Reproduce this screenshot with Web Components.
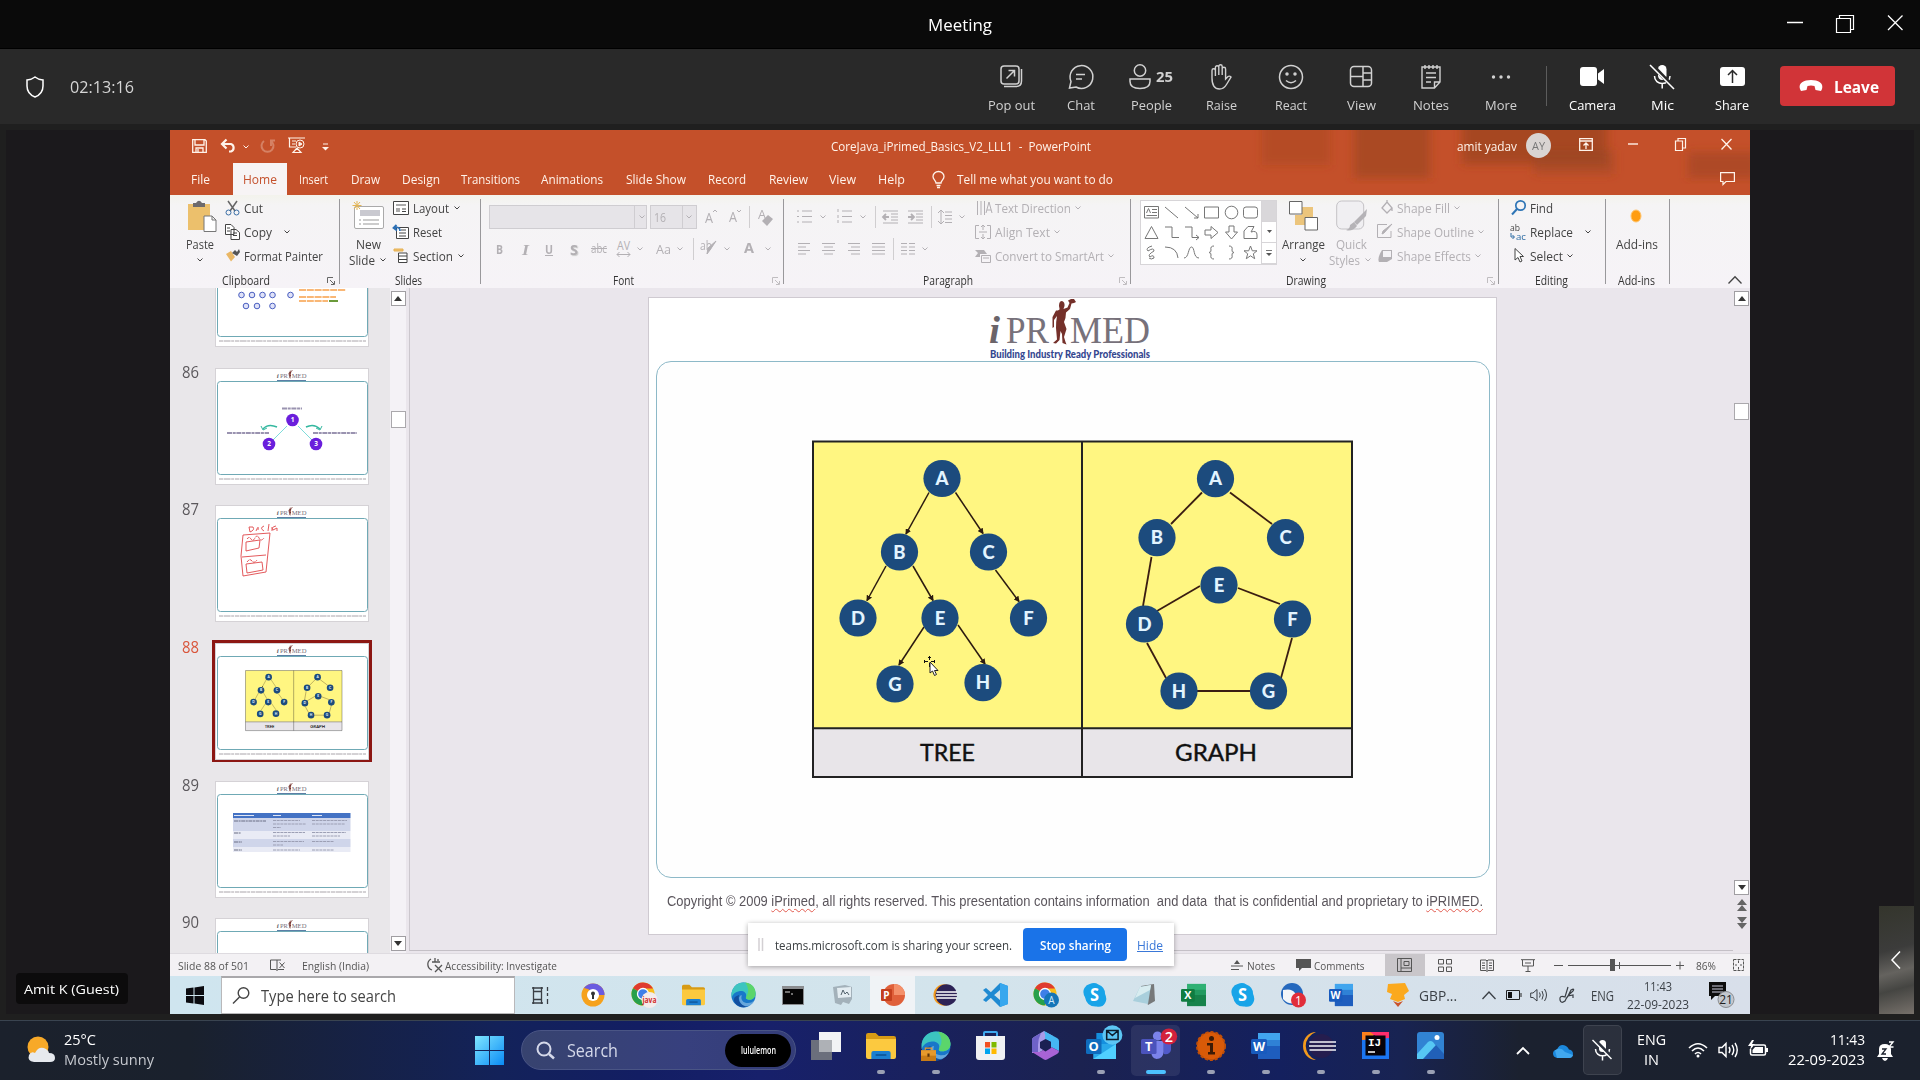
<!DOCTYPE html>
<html lang="en">
<head>
<meta charset="utf-8">
<title>Meeting</title>
<style>
html,body{margin:0;height:100%;background:#1f1f1f;overflow:hidden}
body{font-family:"Open Sans","Noto Sans",sans-serif}
</style>
</head>
<body>
<meeting-app></meeting-app>
<script>
/* ---------- helpers ---------- */
const BASE = `*{box-sizing:border-box}svg{display:block;overflow:visible;flex:none}.row{display:flex;align-items:center}.c{flex:none;display:flex;align-items:center}.col{display:flex;flex-direction:column}`;
const define = (name, css, html) => customElements.define(name, class extends HTMLElement {
  connectedCallback() {
    if (this.shadowRoot) return;
    const r = this.attachShadow({mode: 'open'});
    r.innerHTML = `<style>${BASE}${css}</style>` + (typeof html === 'function' ? html(this) : html);
  }
});
// lay cells left to right; every item is [x, width, markup, extra style]
const row = (x0, items) => {
  let p = x0;
  return items.map(([x, w, h, s = '']) => {
    const out = `<div class="c" style="margin-left:${+(x - p).toFixed(2)}px;width:${w}px;${s}">${h}</div>`;
    p = x + w;
    return out;
  }).join('');
};
const T = (x, w, s, st = '') => [x, w, `<fit-text w="${w}">${s}</fit-text>`, st];
const S = (w, h, inner, attr = '') => `<svg width="${w}" height="${h}" viewBox="0 0 ${w} ${h}" fill="none" stroke="currentColor" ${attr}>${inner}</svg>`;
const I = (x, w, h, inner, st = '', attr = '') => [x, w, S(w, h, inner, attr), st];
const CH = (x, st = '') => I(x - 3, 6, 4, '<path d="M.5 .5L3 3L5.5 .5"/>', st);
const SEP = (x, h = 22) => [x, 1, '', `height:${h}px;background:#d0ced0;align-self:center`];

customElements.define('fit-text', class extends HTMLElement {
  connectedCallback() {
    if (this.shadowRoot) return;
    const w = +this.getAttribute('w');
    this.attachShadow({mode: 'open'}).innerHTML =
      `<style>:host{display:inline-block;white-space:pre;flex:none;width:${w}px}span{display:inline-block;transform-origin:0 50%}</style><span><slot></slot></span>`;
    queueMicrotask(() => {
      const s = this.shadowRoot.querySelector('span');
      const real = s.getBoundingClientRect().width;
      if (real) s.style.transform = `scaleX(${w / real})`;
    });
  }
});

/* ---------- meeting window ---------- */
define('window-bar', `:host{display:flex;align-items:center;height:49px;background:#0a0a0a;border-bottom:1px solid #000;color:#fff;font-size:16.5px}`,
  row(0, [
    T(928, 64, 'Meeting'),
    I(1787, 16, 20, '<path d="M0 8.5H16" stroke-width="1.5"/>'),
    I(1836, 18, 20, '<path d="M.5 4.5H14.5V18.5H.5ZM3.5 4V1.5H17.5V15.5H15" stroke-width="1.2"/>'),
    I(1888, 15, 20, '<path d="M0 1.5L14.500 16M14.500 1.5L0 16" stroke-width="1.3"/>')
  ]));

define('call-button', `:host{display:flex;flex-direction:column;align-items:center;width:70px;height:75px;padding-top:14.5px;color:#d1d1d1;font-size:13.5px}:host([bright]){color:#fff}.i{height:26px;display:flex;align-items:center;gap:5px}.i b{font-size:14.5px}.l{margin-top:6.5px;line-height:19px}`,
  el => `<div class="i"><slot></slot></div><div class="l"><fit-text w="${el.getAttribute('w')}">${el.getAttribute('label')}</fit-text></div>`);

const callBtn = (label, w, icon, extra = '') => `<call-button label="${label}" w="${w}" ${extra}>${icon}</call-button>`;
define('call-bar', `:host{display:flex;height:75px;background:#292929;color:#d6d6d6}
.l{display:flex;align-items:center;width:976px;font-size:17px}.d{width:1px;height:40px;background:#5c5c5c;margin:17px 10px 0}
.leave{margin:17px 0 0 13px;width:115px;height:40px;border-radius:4px;background:#d13438;color:#fff;display:flex;align-items:center;font-weight:700;font-size:16.5px}`,
  `<div class="l">${row(0, [
    I(26, 18, 22, '<path d="M9 1C6.500 3 4 3.800 1 4V10C1 15.500 4 19 9 21C14 19 17 15.500 17 10V4C14 3.800 11.500 3 9 1Z" stroke="#fff" stroke-width="1.5"/>'),
    T(70, 64, '02:13:16')])}</div>
  ${callBtn('Pop out', 47, S(24, 26, '<rect x="2" y="2" width="18" height="18" rx="3"/><path d="M5 22.500H17Q22.500 22.500 22.500 17V5M7.500 14.500L15.500 6.500M9.500 6.500H15.500V12.500" />', 'stroke-width="1.5"'))}
  ${callBtn('Chat', 28, S(26, 26, '<path d="M1.500 24L3 17.500A11.400 11.400 0 1 1 8 23Z M8 10.500H17M8 15H14"/>', 'stroke-width="1.5"'))}
  ${callBtn('People', 41, S(22, 26, '<circle cx="11" cy="6.500" r="5.700"/><path d="M1 15H21V17.500C21 22 17 24.500 11 24.500S1 22 1 17.500Z"/>', 'stroke-width="1.5"') + '<b><fit-text w="17">25</fit-text></b>')}
  ${callBtn('Raise', 31, S(24, 26, '<path d="M3 14V6.500a1.700 1.700 0 0 1 3.400 0V12V3.500a1.700 1.700 0 0 1 3.400 0V11V2.500a1.700 1.700 0 0 1 3.400 0V11V5a1.700 1.700 0 0 1 3.400 0V15L19 12.500Q20.500 11.500 22 13L17.500 20.500C15.500 24 13.500 25 10.500 25C5.500 25 3 21 3 14Z"/>', 'stroke-width="1.4"'))}
  ${callBtn('React', 32, S(26, 26, '<circle cx="13" cy="13" r="11.500"/><circle cx="9" cy="10" r="1" fill="currentColor"/><circle cx="17" cy="10" r="1" fill="currentColor"/><path d="M8 16.500Q13 21 18 16.500"/>', 'stroke-width="1.5"'))}
  ${callBtn('View', 29, S(24, 26, '<rect x="1.500" y="2.500" width="21" height="20" rx="3.500"/><path d="M14 2.500V22.500M1.500 12.500H14M14 9H22.500M14 16H22.500"/>', 'stroke-width="1.5"'))}
  ${callBtn('Notes', 36, S(20, 26, '<path d="M1 3H19V18L13.500 24H1ZM13.500 24V18H19M5 9H15M5 13.500H15M5 18H10M4 1V5M8 1V5M12 1V5M16 1V5"/>', 'stroke-width="1.4"'))}
  ${callBtn('More', 32, S(20, 26, '<g fill="currentColor" stroke="none"><circle cx="2.500" cy="13" r="1.700"/><circle cx="10" cy="13" r="1.700"/><circle cx="17.500" cy="13" r="1.700"/></g>'))}
  <div class="d"></div>
  ${callBtn('Camera', 47, S(25, 26, '<g fill="currentColor" stroke="none"><rect y="3" width="17" height="19" rx="3"/><path d="M18 9.500L24 5V20L18 15.500Z"/></g>'), 'bright')}
  ${callBtn('Mic', 23, S(26, 26, '<rect x="9" y="1" width="8.500" height="15" rx="4.200" fill="currentColor" stroke="none"/><path d="M5.500 12C5.500 22 21 22 21 12M13.200 19V24.500" stroke-width="1.500"/><path d="M2 0L26 25" stroke="#292929" stroke-width="4"/><path d="M1 1L25 25" stroke-width="1.600"/>'), 'bright')}
  ${callBtn('Share', 34, S(25, 26, '<rect y="3" width="25" height="19" rx="3" fill="currentColor" stroke="none"/><path d="M12.500 19V7M8 11L12.500 6.500L17 11" stroke="#292929" stroke-width="1.500"/>'), 'bright')}
  <div class="leave">${row(0, [I(19, 24, 12, '<path d="M1 9C-1 3 5 0 12 0S25 3 23 9L22 11L16.500 10L15.500 6Q12 4.800 8.500 6L7.500 10L2 11Z" fill="#fff" stroke="none"/>'), T(54, 45, 'Leave')])}</div>`);

/* ---------- PowerPoint title + tabs ---------- */
define('ppt-head', `:host{display:block;position:relative;height:65px;background:#c4502a;color:#fff3ea;font-size:12.500px;overflow:hidden}
.bg{position:absolute;inset:0}.t{display:flex;align-items:center;height:33px;position:relative}.m{display:flex;align-items:center;height:32px;position:relative;font-size:13px}
.av{width:25px;height:25px;border-radius:50%;background:#d9d4d2;color:#777;font-size:11px;justify-content:center}`,
  `<svg class="bg" width="1580" height="65"><defs><filter id="b"><feGaussianBlur stdDeviation="5"/></filter></defs>
   <g filter="url(#b)" fill="#97441f"><rect x="1092" y="-10" width="68" height="45" opacity=".35"/><rect x="1184" y="-10" width="76" height="58" opacity=".6"/><rect x="1292" y="-10" width="145" height="44" opacity=".65"/><rect x="1364" y="20" width="80" height="24" opacity=".45"/><rect x="1518" y="22" width="70" height="26" opacity=".5"/></g></svg>
  <div class="t">${row(170, [
    I(192, 15, 14, '<path d="M.7 .7H13L14.300 2V13.300H.7ZM3 1V6H12V1M4 13V9H11V13M6 10V13" stroke-width="1.300"/>', 'margin-top:-2px'),
    I(221, 16, 14, '<path d="M1 5H10A4 4 0 0 1 10 12.500H8M5.500 .5L1 5L5.500 9.500" stroke-width="2.200"/>', 'margin-top:-2px'),
    CH(246), I(260, 15, 14, '<path d="M4 2A6 6 0 1 0 11 2M11 7V1.500H15" stroke-width="2"/>', 'opacity:.3;margin-top:-2px'),
    I(288, 17, 16, '<path d="M0 1H17M1.500 1V10H8M4 4H8M4 7H7M9 11L5 15.500H13L9 11" stroke-width="1.200"/><circle cx="12" cy="7" r="4"/><path d="M11 5L14 7L11 9Z" fill="currentColor"/>', 'margin-top:-3px'),
    I(322, 7, 8, '<path d="M1 1H6"/><path d="M0 4H7L3.500 7.500Z" fill="currentColor" stroke="none"/>'),
    T(831, 260, 'CoreJava_iPrimed_Basics_V2_LLL1  -  PowerPoint'), T(1457, 60, 'amit yadav'),
    [1526, 25, '<div class="c av"><fit-text w="13">AY</fit-text></div>', 'margin-top:-2px'],
    I(1579, 14, 17, '<path d="M.7 1.700H13.300V13.300H.7ZM.7 4H13.300M7 12V6.500M4.500 8.500L7 6L9.500 8.500" stroke-width="1.300"/>', 'margin-top:-3px'),
    I(1628, 10, 17, '<path d="M0 6H10" stroke-width="1.400"/>'),
    I(1675, 11, 17, '<path d="M.5 4H7.500V13.500H.5ZM3 3.500V1.500H10.500V11H8" stroke-width="1.200"/>', 'margin-top:-2px'),
    I(1721, 11, 17, '<path d="M.5 2L10.500 12.500M10.500 2L.5 12.500" stroke-width="1.300"/>', 'margin-top:-2px')])}</div>
  <div class="m">${row(170, [T(191, 19, 'File'), [233, 54, '<fit-text w="34">Home</fit-text>', 'background:#f7f4f5;color:#c4512d;height:32px;padding-left:10px'],
    ...[[299, 29, 'Insert'], [351, 29, 'Draw'], [402, 38, 'Design'], [461, 59, 'Transitions'], [541, 62, 'Animations'], [626, 60, 'Slide Show'], [708, 38, 'Record'], [769, 39, 'Review'], [829, 27, 'View'], [878, 27, 'Help']].map(a => T(...a)),
    I(932, 13, 17, '<path d="M4 12C4 9.500 1 8.500 1 5.500A5.500 5 0 0 1 12 5.500C12 8.500 9 9.500 9 12ZM4.500 14.500H8.500M5 16.500H8" stroke-width="1.300"/>'),
    T(957, 156, 'Tell me what you want to do'),
    I(1720, 15, 13, '<path d="M.6 .6H14.400V9.500H6L3 12.500V9.500H.6Z" stroke-width="1.200"/>', 'margin-top:-2px')])}</div>`);

/* ---------- ribbon ---------- */
define('ribbon-group', `:host{display:block;flex:none;width:var(--w);position:relative;height:93px;padding-top:1px}
:host([line])::after{content:"";position:absolute;right:0;top:4px;bottom:4px;width:1px;background:#99989b}
.b{display:flex;height:77px}.f{display:flex;align-items:center;height:16px;font-size:12px;line-height:16px;color:#333}`,
  el => { const x0 = +el.getAttribute('x'), lx = +el.getAttribute('lx'), lw = +el.getAttribute('lw'), d = +el.getAttribute('d');
    return `<div class="b"><slot></slot></div><div class="f">${row(x0, [T(lx, lw, el.getAttribute('label')), ...(d ? [I(d, 8, 8, '<path d="M.5 6V.5H6M3 3L7 7M7.500 4V7.500H4"/>', `color:${el.hasAttribute('dim') ? '#c0bdc0' : '#666'}`)] : [])])}</div>`; });
const group = (x, w, label, lx, lw, d, body, extra = '') => `<ribbon-group style="--w:${w}px" x="${x}" label="${label}" lx="${lx}" lw="${lw}" d="${d}" ${extra}>${body}</ribbon-group>`;
const rows = (x0, w, list, cls = '') => `<div class="col ${cls}" style="width:${w}px">${list.map(r => `<div class="row r">${row(x0, r)}</div>`).join('')}</div>`;
const big = (x0, w, icon, l1, l2, cls = '') => `<div class="col ${cls}" style="width:${w}px"><div class="row bi">${row(x0, [icon])}</div><div class="row bt">${row(x0, l1)}</div><div class="row bt">${row(x0, l2)}</div></div>`;
const G = 'color:#b3b0b4';
const L = (ws, x = 0) => ws.map((w, i) => `<path d="M${x} ${1.5 + i * 3.5}H${x + w}"/>`).join('');

define('shape-gallery', `:host{display:flex;width:137px;height:65px;background:#fff;border:1px solid #d7d5d8;margin-top:4px;color:#777}
.g{display:grid;grid-template-columns:repeat(6,19.8px);grid-template-rows:repeat(3,20px);padding:2px 0 0 1px;place-items:center;flex:1}
.s{width:15px;display:grid;grid-template-rows:1fr 1fr 1fr;border-left:1px solid #d7d5d8}.s div{display:grid;place-items:center;border-bottom:1px solid #d7d5d8}.s div:first-child{background:#d9d7da}`,
  `<div class="g">${['<path d="M.5 1.500H14.500V13H.5ZM8 4.500H13M8 7.500H13M2.500 10.500H13M2.500 8L4.500 3.500L6.500 8"/>', '<path d="M1 2L14 13"/>', '<path d="M1 2L14 13M14 9V13H10"/>', '<path d="M.5 2H14.500V13H.5Z"/>', '<circle cx="7.500" cy="7.500" r="6.300"/>', '<rect x=".5" y="2" width="14" height="11" rx="2.500"/>',
     '<path d="M7.500 1.500L14 13.500H1Z"/>', '<path d="M1 2H8V12.500H15"/>', '<path d="M1 2H8V12.500H15M12 10L15 12.500L12 15"/>', '<path d="M1 5H7V1.500L14 7.500L7 13.500V10H1Z"/>', '<path d="M5 1V7H1.500L7.500 14L13.500 7H10V1Z"/>', '<path d="M1 13.500V6L5 1.500H11L8 7Q14 5 14 10V13.500Z"/>',
     '<path d="M8 1Q1 3 4 6Q10 2 10 6Q3 10 6 12Q10 9 10 13Q7 15 5 13"/>', '<path d="M1 2Q13 2 14 13"/>', '<path d="M0 13C5 13 4 2 7.500 2S9 13 15 13"/>', '<path d="M10 1Q6 1 7 5Q7.500 7 5 7.500Q7.500 8 7 10Q6 14 10 14"/>', '<path d="M5 1Q9 1 8 5Q7.500 7 10 7.500Q7.500 8 8 10Q9 14 5 14"/>', '<path d="M7.500 1L9.300 5.800H14L10.300 8.800L11.700 13.700L7.500 10.800L3.300 13.700L4.700 8.800L1 5.800H5.700Z"/>'].map(p => S(15, 15, p)).join('')}</div>
  <div class="s"><div></div><div>${S(5, 3, '<path d="M0 0H5L2.500 3Z" fill="#555" stroke="none"/>')}</div><div>${S(6, 6, '<path d="M0 .5H6"/><path d="M0 3H6L3 6Z" fill="#555" stroke="none"/>')}</div></div>`);

define('ppt-ribbon', `:host{display:flex;height:93px;background:linear-gradient(#f3f3ec 0,#f5f4f5 10px,#f6f3f7);color:#444;font-size:13px}
.r{height:24px}.bi{height:40px}.bt{height:16px;line-height:16px}.g{color:#b3b0b4}.f1 .row{height:32px}.f1{padding-top:5px}`,
  group(170, 170, 'Clipboard', 222, 48, 327,
    big(170, 54, I(188, 29, 32, '<path d="M0 4H22V30H0Z" fill="#ecc06c" stroke="none"/><path d="M5 7V3H8Q11-1.500 14 3H17V7Z" fill="#6d6a6c" stroke="none"/><path d="M16 16H24L28 20V31.500H16ZM24 16V20H28" fill="#fff" stroke="#777"/>'), [T(186, 28, 'Paste')], [CH(200)]) +
    rows(224, 115, [
      [I(225, 15, 16, '<path d="M3 1L10 11M12 1L5 11" stroke-width="1.500" stroke="#666"/><circle cx="3.500" cy="12.500" r="2.500" stroke="#3a6ea5"/><circle cx="11.500" cy="12.500" r="2.500" stroke="#3a6ea5"/>'), T(244, 19, 'Cut')],
      [I(225, 15, 16, '<path d="M.5 .5H6L9 3.500V10.500H.5ZM6 5.500H11L14.500 8.500V15.500H6ZM8 9H12M8 11.500H12M2 4H5M2 7H5" fill="#fff"/>'), T(244, 28, 'Copy'), CH(287)],
      [I(226, 14, 13, '<path d="M0 5L5 2L9 8L5 12.500Z" fill="#eab765" stroke="none"/><path d="M6 4L9 1L11 3L13 0L14 3L11 7Z" fill="#555" stroke="none"/>'), T(244, 79, 'Format Painter')]]), 'line') +
  group(340, 141, 'Slides', 395, 27, 0,
    big(340, 52, I(353, 31, 30, '<rect x="1.500" y="5.500" width="29" height="22" rx="1.500" fill="#fff" stroke="#aaa"/><path d="M7 9H27V15H7Z" fill="#c9c9d0" stroke="none"/><path d="M6 19H8M10 19H26M6 23H8M10 23H26" stroke="#999"/><path d="M4 0V9M-.5 4.500H8.500M1 1L7 8M7 1L1 8" stroke="#e3b554"/>'), [T(356, 25, 'New')], [T(349, 26, 'Slide'), CH(383)]) +
    rows(392, 88, [
      [I(393, 16, 14, '<path d="M.5 .5H15.500V13.500H.5Z" fill="#fff"/><path d="M3 3H13V5H3ZM3 7H7V11H3Z" fill="#aaa" stroke="none"/><path d="M9 8H13M9 10.500H13"/>'), T(413, 36, 'Layout'), CH(457)],
      [I(393, 16, 14, '<path d="M3.500 2.500H15.500V13.500H3.500ZM6 8H13M6 11H13M8 5H13" fill="#fff"/><path d="M7 6Q7 1 1 3M3.500 0L.5 3L4 5.500" stroke="#2b6fb5" stroke-width="1.800"/>'), T(413, 29, 'Reset')],
      [I(393, 16, 15, '<path d="M1 1H10V3H1Z" fill="#f0c070" stroke="#e5b050"/><path d="M5.500 5H14V14.500H5.500ZM5.500 8H14M5.500 11.500H14" fill="#fff"/>'), T(413, 40, 'Section'), CH(461)]]), 'line') +
  group(481, 303, 'Font', 613, 21, 772,
    `<div class="col f1" style="width:302px;${G}"><div class="row">${row(481, [
      [489, 158, row(489, [[633, 1, '', 'height:22px;background:#cfcdd1;'], CH(641)]), 'height:24px;border:1px solid #cfcdd1;background:#e6e4e8'],
      [650, 47, row(651, [T(654, 12, '16'), [682, 1, '', 'height:22px;background:#cfcdd1'], CH(689)]), 'height:24px;border:1px solid #cfcdd1;background:#e6e4e8'],
      T(705, 8, 'A', 'font-size:15px'), I(713, 4, 16, '<path d="M0 3L2 1L4 3"/>'), T(729, 8, 'A', 'font-size:14px'), I(737, 4, 16, '<path d="M0 1L2 3L4 1"/>'), SEP(749),
      T(758, 8, 'A', 'margin-top:-6px'), I(762, 11, 14, '<path d="M6 3L11 7L5 14L0 9Z" fill="currentColor" stroke="none"/>', 'margin-top:4px')])}</div>
     <div class="row">${row(481, [T(496, 7, '<b>B</b>'), T(522, 7, '<b><i style="font-family:Liberation Serif">I</i></b>', 'font-size:15px'), T(545, 8, '<b><u>U</u></b>'), T(570, 8, '<b>S</b>', 'font-size:15px;text-shadow:1px 1px 1px #ccc'), T(591, 16, '<s>abc</s>', 'font-size:12px'),
      [617, 13, S(13, 17, '<path d="M0 14.500H13M2.500 12L0 14.500L2.500 17M10.500 12L13 14.500L10.500 17"/><text x="0" y="10" font-size="12" textLength="13" lengthAdjust="spacingAndGlyphs" fill="currentColor" stroke="none">AV</text>')], CH(640), T(656, 15, 'Aa'), CH(680), SEP(693),
      T(700, 12, 'ab', 'font-size:12px;margin-top:-6px'), I(707, 9, 15, '<path d="M9 0L3 9L0 13L1 7Z" fill="currentColor"/>'), CH(727), T(744, 10, '<b>A</b>', 'font-size:15px;margin-top:-3px'), CH(768)])}</div></div>`, 'line dim') +
  group(784, 347, 'Paragraph', 923, 50, 1119,
    `<div class="col f1" style="width:190px;${G}"><div class="row">${row(784, [
      I(797, 15, 15, '<path d="M5 2H15M5 7.500H15M5 13H15M0 2H2M0 7.500H2M0 13H2"/>'), CH(823), I(837, 15, 15, '<path d="M5 2H15M5 7.500H15M5 13H15M1 0V3M1 6V9M1 11V14"/>'), CH(863), SEP(875),
      I(883, 15, 14, '<path d="M0 1H15M8 4H15M8 7H15M8 10H15M0 13H15"/><path d="M6 7H0M3 4L0 7L3 10" stroke-width="1.800"/>'), I(908, 15, 14, '<path d="M0 1H15M8 4H15M8 7H15M8 10H15M0 13H15"/><path d="M0 7H6M3 4L6 7L3 10" stroke-width="1.800"/>'), SEP(931),
      I(938, 14, 14, '<path d="M3 0V14M0 3L3 0L6 3M0 11L3 14L6 11M7 2H14M7 5.500H14M7 9H14M7 12.500H14"/>'), CH(962)])}</div>
      <div class="row">${row(784, [I(798, 12, 13, L([12, 8, 12, 8])), I(822, 13, 13, '<path d="M0 1.500H13M2 5H11M0 8.500H13M2 12H11"/>'), I(848, 12, 13, '<path d="M0 1.500H12M3 5H12M0 8.500H12M3 12H12"/>'), I(872, 13, 13, L([13, 13, 13, 13])), SEP(893), I(901, 14, 13, L([6, 6, 6, 6]) + L([6, 6, 6, 6], 8)), CH(925)])}</div></div>` +
    rows(974, 156, [
      [I(977, 15, 16, '<path d="M.5 1V15M4 1V15M7.500 1V15M9 13L12 2L15 13M10 10H14"/>'), T(995, 76, 'Text Direction'), CH(1078)],
      [I(975, 16, 14, '<path d="M4 .5H.5V13.500H4M12 .5H15.500V13.500H12M8 0V5M6 2L8 0L10 2M8 14V9M6 12L8 14L10 12M4 7H12"/>'), T(995, 55, 'Align Text'), CH(1057)],
      [I(975, 16, 14, '<path d="M0 1H9L12 5H5V8H0L3 4Z" fill="currentColor" stroke="none"/><path d="M6.500 6.500H15.500V13.500H6.500ZM8 9H14"/>'), T(995, 109, 'Convert to SmartArt'), CH(1111)]], 'g'), 'line dim') +
  group(1131, 368, 'Drawing', 1286, 40, 1487,
    `<div style="width:146px;padding-left:9px"><shape-gallery></shape-gallery></div>` +
    big(1277, 51, I(1289, 29, 30, '<path d="M13 6H24V16H13ZM6 14H16V24H6Z" fill="#ecc57c" stroke="none"/><path d="M.5 .5H13V13H.5ZM16 16.500H28.500V29H16Z" fill="#fff" stroke="#666"/>'), [T(1282, 43, 'Arrange')], [CH(1303)]) +
    big(1328, 47, I(1336, 32, 31, '<rect x=".7" y="1" width="27" height="28" rx="5" fill="#f0eff2" stroke="#c4c2c6"/><path d="M31 9L30 16L21 25L18 22Z" fill="#b5b3b7" stroke="none"/><path d="M18 22L21 26Q16 32 10 30Q14 29 14 25Z" fill="#b5b3b7" stroke="none"/>'), [T(1336, 31, 'Quick')], [T(1329, 31, 'Styles'), CH(1368)], 'g') +
    rows(1375, 123, [
      [I(1381, 13, 14, '<path d="M1 8L6 2L11 8L6 13ZM6 2V0M11 8V11" stroke-width="1.300"/>', 'margin-top:-2px'), T(1397, 53, 'Shape Fill'), CH(1457)],
      [I(1377, 16, 14, '<path d="M14 7V13.500H.5V.5H10"/><path d="M15 0L7 9L5 10L6 7Z" fill="currentColor"/>', 'margin-top:-2px'), T(1397, 77, 'Shape Outline'), CH(1481)],
      [I(1378, 15, 14, '<path d="M4 1H14V10L9 13H1Q-1 9 4 1Z" fill="currentColor" stroke="none"/><path d="M5 2H13V8H5Z" fill="#f4f2f5" stroke="none"/>'), T(1397, 74, 'Shape Effects'), CH(1478)]], 'g'), 'line dim') +
  group(1499, 107, 'Editing', 1535, 33, 0, rows(1499, 106, [
      [I(1511, 15, 15, '<circle cx="9.500" cy="5.500" r="4.700" stroke="#2e75b6" stroke-width="1.700"/><path d="M6 9L1 14.500" stroke="#2e75b6" stroke-width="2"/>'), T(1530, 23, 'Find')],
      [[1510, 16, '<div class="col" style="width:16px;font-size:9.500px;line-height:9px"><fit-text w="10">ab</fit-text><div class="row" style="gap:1px;color:#2e6da4">' + S(5, 7, '<path d="M1 0V4H4M2.500 2L4.500 4L2.500 6" stroke="#2e6da4"/>') + '<fit-text w="10">ac</fit-text></div></div>'], T(1530, 43, 'Replace'), CH(1588)],
      [I(1514, 10, 15, '<path d="M1 .5V12L4 9.500L6 14L8 13L6 8.500H9.500Z" fill="#fff"/>'), T(1530, 33, 'Select'), CH(1570)]]), 'line') +
  group(1606, 64, 'Add-ins', 1618, 37, 0, big(1606, 63, I(1629, 14, 14, '<ellipse cx="7" cy="7" rx="5" ry="6" fill="#ff9d12" stroke="#ffc36b" stroke-width="1"/>'), [T(1616, 42, 'Add-ins')], []), 'line') +
  `<div class="row" style="height:93px;align-items:flex-end;padding-bottom:4px">${row(1670, [I(1728, 14, 8, '<path d="M.5 7.500L7 .7L13.500 7.500" stroke-width="1.300"/>')])}</div>`);

/* ---------- slide pane ---------- */
const figure = `<path d="M69 5Q69 0 72 0Q75 1 74.500 5L73.500 8L77.500 6.500L79.500 2L78-.5L81-2H84L86 1L84 2L81.500 2.500L80 8L76 11.500Q76 17 74 21L76.500 28L74 36L75.500 41L76.500 43.500L72.500 42L72 33L70.500 30L69.500 39L66 42.500L63 42L67 38.500L66 27Q66 20 67 15L64 19V26L62.500 27V16L66 9.500Q70 9.500 69.500 7.500Z" fill="#74302a"/>`;
const logo = `<text x="-1" y="41.500" font-family="Liberation Serif" font-style="italic" font-weight="700" font-size="37" fill="#6b6469" textLength="11" lengthAdjust="spacingAndGlyphs">i</text>
 <text x="16" y="41.500" font-family="Liberation Serif" font-size="37" fill="#77717a" textLength="43" lengthAdjust="spacingAndGlyphs">PR</text><text x="80" y="41.500" font-family="Liberation Serif" font-size="37" fill="#77717a" textLength="80" lengthAdjust="spacingAndGlyphs">MED</text>${figure}`;
const edges = (a, c, w, m) => a.map(l => `<path d="M${l[0]} ${l[1]}L${l[2]} ${l[3]}" stroke="${c}" stroke-width="${w}" ${m}/>`).join('');
const nodes = a => a.map(([n, x, y]) => `<circle cx="${x}" cy="${y}" r="18.600" fill="#1c4b7d"/><text x="${x}" y="${y + 6.5}" text-anchor="middle" font-family="Lato" font-weight="900" font-size="18.500" fill="#e2f4ff">${n}</text>`).join('');
const diagram = `<defs><marker id="ar" viewBox="0 0 6 6" refX="5" refY="3" markerWidth="6" markerHeight="6" markerUnits="userSpaceOnUse" orient="auto"><path d="M0 0L6 3L0 6Z" fill="#2b1a10"/></marker></defs>
 <rect x="813" y="441.500" width="539" height="286.500" fill="#fff681"/><rect x="813" y="728" width="539" height="49" fill="#e8e5e9"/>
 <path d="M813 441.500H1352V777H813ZM1082 441.500V777M813 728.300H1352" fill="none" stroke="#222" stroke-width="2"/>
 ${edges([[929, 492.5, 906, 534], [955.5, 492.5, 983, 533.5], [886, 566, 867, 600.5], [913, 566, 933, 600.5], [995.5, 570, 1019, 601.5], [924, 627, 899, 665], [958, 625, 985, 664]], '#2b1a10', 1.5, 'marker-end="url(#ar)"')}
 ${edges([[1202, 492.5, 1171, 524], [1230, 492.5, 1272, 524], [1151.5, 557, 1143, 606], [1157, 611, 1200, 586], [1238, 588, 1280, 604], [1147, 643, 1166, 678], [1292, 638, 1281, 678], [1197, 691, 1250, 691]], '#3a1d12', 1.8, '')}
 ${nodes([['A', 942, 478.5], ['B', 899.5, 552], ['C', 988.5, 552], ['D', 858, 618], ['E', 940, 618], ['F', 1028.5, 618], ['G', 895, 684], ['H', 983, 682.7], ['A', 1215.5, 478.7], ['B', 1157, 537.7], ['C', 1285.5, 537.7], ['E', 1219, 585], ['D', 1144.5, 624], ['F', 1292.5, 619], ['H', 1179, 691], ['G', 1268.5, 691]])}
 <text x="920" y="760.500" font-family="Lato" font-size="22.500" textLength="55" lengthAdjust="spacingAndGlyphs" fill="#111" stroke="#111" stroke-width=".4">TREE</text>
 <text x="1175" y="760.500" font-family="Lato" font-size="22.500" textLength="82" lengthAdjust="spacingAndGlyphs" fill="#111" stroke="#111" stroke-width=".4">GRAPH</text>`;
const thumbArt = {
  85: `<g stroke="#4a5fc0" fill="#dfe2f8"><circle cx="25.500" cy="64" r="2.800"/><circle cx="36" cy="64" r="2.800"/><circle cx="46.500" cy="64" r="2.800"/><circle cx="56.500" cy="64" r="2.800"/><circle cx="74.500" cy="64" r="2.800"/><circle cx="30" cy="75" r="2.800"/><circle cx="41" cy="75" r="2.800"/><circle cx="56.500" cy="75" r="2.800"/></g><path d="M83 59H130M83 66H120M83 70H112" stroke="#f7a04a" stroke-width="1.500" stroke-dasharray="7 .8"/><path d="M113 70H122" stroke="#6b9a3a" stroke-width="2"/>`,
  86: `<path d="M71 57L57 71M82 57L96 71" stroke="#7fdcda"/><path d="M61 58Q52 54 47 60M90 58Q98 54 104 60" stroke="#35b8a0" stroke-width="1.500"/><path d="M45 57L47 61L51 59M106 57L104 61L100 59" stroke="#35b8a0"/><g fill="#6a1edc"><circle cx="76.500" cy="51" r="6.300"/><circle cx="53" cy="75" r="6.300"/><circle cx="100" cy="75" r="6.300"/></g><g font-family="Open Sans" font-weight="700" font-size="6.500" fill="#fff" text-anchor="middle"><text x="76.500" y="53.300">1</text><text x="53" y="77.300">2</text><text x="100" y="77.300">3</text></g><g stroke="#9a93b0" stroke-width="1.800" stroke-dasharray="5 .7 3 .7"><path d="M66 39.500H86M11 64H53M97 64H141"/></g>`,
  87: `<g stroke="#e0474b" stroke-width=".9"><path d="M27 29L54 27L50 66L27 70L25 50ZM26 51L50 49M30 36L44 34L43 42L30 45ZM30 58L46 56L47 64L31 67Z"/><path d="M31 33Q33 30 35 33T39 32T43 32T48 32M31 56Q34 52 36 55T41 54" stroke-dasharray="3 .6"/><path d="M33 21L34 26Q39 24 37 21ZM40 25Q43 18 42 24M48 20Q43 22 48 25M53 18L52 25M56 21V25M60 20Q55 21 57 24L61 22V25"/></g>`,
  88: `<g transform="translate(-116,-52.500) scale(.179)">${diagram.replace('id="ar"', 'id="ar2"').replace('#ar)', '#ar2)')}</g>`,
  89: `<path d="M17 31H134.500V36H17Z" fill="#4472c4"/><path d="M17 36H134.500V49H17ZM17 57H134.500V65H17Z" fill="#cfd5ea"/><path d="M17 49H134.500V57H17ZM17 65H134.500V70H17Z" fill="#e9ebf5"/><path d="M18 33.500H38M57 33.500H65M96 33.500H106" stroke="#dfe6f5"/><g stroke="#6b6f84" stroke-dasharray="4 .6 2 .6" stroke-width="1.200"><path d="M18 39H50M18 51H25M18 60H26M18 68H26"/></g><g stroke="#9c9fb4" stroke-dasharray="3 .7"><path d="M57 38.500H84M57 42H90M57 45.500H65M96 38.500H131M96 42H129M57 50.500H89M57 54H74M96 50.500H130M96 54H124M57 59.500H88M57 63H67M96 59.500H118M57 68H84M96 68H118"/></g>`,
  90: ''
};
define('slide-thumb', `:host{display:flex;flex:none;height:122px;margin-bottom:15.7px}
.n{width:46px;margin-top:-4px;padding-left:12px;font-size:16px;line-height:22px;color:#5b585c;flex:none}
:host([on]) .n{color:#d9553b}.s{padding:1px 1px 1px 1px;border:3px solid transparent;margin-left:-4px;width:160px;height:122px}:host([on]) .s{border-color:#8c1713}
.p{width:152px;height:115px;background:#fff;box-shadow:0 0 0 1px #d5d2d6}`,
  el => { const n = el.getAttribute('n'), cut = n === '85'; return `<div class="n">${cut ? '' : `<fit-text w="17">${n}</fit-text>`}</div><div class="s"><div class="p">${S(152, 115,
   `${cut ? '' : `<g stroke="none" transform="translate(61,1.500) scale(.184)">${logo}</g>`}<path d="M61 11.500H90" stroke="#5b7fa6"/><rect x="1.500" y="12.500" width="150" height="93" rx="3" stroke="#6fa9b5"/><path d="M3 110H150" stroke="#a9a4aa" stroke-dasharray="4 .6 7 .6 3 .8"/><g stroke="none">${thumbArt[n]}</g>`)}</div></div>`; });

define('scroll-bar', `:host{display:flex;flex-direction:column;width:17px;align-items:center;padding-top:3px}
.b{width:15px;height:15px;background:#fff;border:1px solid #a09ea2;display:grid;place-items:center;color:#333}.h{width:15px;height:17px;background:#fff;border:1px solid #aaa8ac}.x{margin-top:4px}`,
  el => `<div class="b">${S(8, 5, '<path d="M0 5L4 0L8 5Z" fill="currentColor" stroke="none"/>')}</div><div class="h" style="margin-top:${el.getAttribute('a')}px"></div><div class="b" style="margin-top:${el.getAttribute('z')}px">${S(8, 5, '<path d="M0 0L4 5L8 0Z" fill="currentColor" stroke="none"/>')}</div>` +
    (el.hasAttribute('pages') ? `<div class="x">${S(10, 30, '<path d="M5 0L10 6H0ZM5 6L10 12H0ZM0 18H10L5 24ZM0 24H10L5 30Z" fill="#666" stroke="none"/>')}</div>` : ''));

define('slide-page', `:host{display:flex;flex-direction:column;position:relative;width:847px;height:636px;background:#fff;box-shadow:0 0 0 1px #cfcad1;flex:none}
.l{height:63px;padding:3px 0 0 341px}.f{margin-left:7px;width:834px;height:517px;border:1px solid #8db9c8;border-radius:15px;background:#fefefe}
.c0{display:flex;align-items:center;height:47px;padding-left:18px;font:14px "Liberation Sans",sans-serif;color:#5a555c}
u{text-decoration:underline wavy #e25b4f 1px;text-underline-offset:2px}.cur{position:absolute;left:274px;top:358px}`,
  `<div class="l">${S(160, 58, `<g stroke="none">${logo}<text x="0" y="56.500" font-family="Lato" font-weight="900" font-size="11" fill="#34468f" textLength="160" lengthAdjust="spacingAndGlyphs">Building Industry Ready Professionals</text></g>`)}</div>
  <div class="f"><svg width="832" height="515" viewBox="657 362 832 515">${diagram}</svg></div>
  <div class="c0"><fit-text w="816">Copyright © 2009 <u>iPrimed</u>, all rights reserved. This presentation contains information  and data  that is confidential and proprietary to <u>iPRIMED.</u></fit-text></div>
  <div class="cur">${S(16, 22, '<path d="M1 5.500H12M6.500 0V11M5 1.500H8M1.500 4V7M11.500 4V7" stroke="#111" stroke-dasharray="4 3"/><path d="M7 6V17L9.500 15L11.500 19.500L13.500 18.500L11.500 14.500H15Z" fill="#fff" stroke="#222"/>')}</div>`);

define('ppt-body', `:host{display:flex;height:665.500px;overflow:hidden;background:#eae6ec}
.p{width:220px;background:#e9e7ea;overflow:hidden;display:flex;flex-direction:column;height:665.500px}.p slide-thumb:first-of-type{margin-top:-61px}
.sc{background:#f4f2f6;width:16px;margin-right:3px}.m{flex:1;border-left:1px solid #cbc7cd;border-bottom:1px solid #c4c0c6;height:663.500px;padding:10px 0 0 239px}`,
  `<div class="p">${[85, 86, 87, 88, 89, 90].map(n => `<slide-thumb n="${n}" ${n === 88 ? 'on' : ''}></slide-thumb>`).join('')}</div>
   <scroll-bar class="sc" a="105" z="508"></scroll-bar><div class="m"><slide-page></slide-page></div><scroll-bar a="97" z="460" pages></scroll-bar>`);

define('ppt-status', `:host{display:flex;align-items:center;height:23px;background:#f3f1f4;border-top:1px solid #dedbe0;color:#555;font-size:11.500px}`,
  row(170, [T(178, 71, 'Slide 88 of 501'), I(270, 15, 12, '<path d="M7 1V11.500M7 1H.5V10.500H6L7 11.500L8 10.500H14M7 1H11M9.500 3.500L14.500 9M14.500 3.500L9.500 9"/>'), T(302, 67, 'English (India)'),
    I(426, 17, 14, '<path d="M5 1A6 6 0 0 0 6 12M9 0V4M6 4H14M9 7L16 14M16 7L9 14M12 1V3" stroke-width="1.300"/>'), T(445, 112, 'Accessibility: Investigate'),
    I(1231, 12, 11, '<path d="M0 6H12M0 9.500H8"/><path d="M3 4L6 0L9 4Z" fill="currentColor" stroke="none"/>'), T(1247, 28, 'Notes'),
    I(1296, 15, 12, '<path d="M0 0H15V9H6L3 12V9H0Z" fill="currentColor" stroke="none"/>'), T(1313.5, 50.5, 'Comments'),
    [1384.5, 40.5, S(15, 14, '<path d="M.5 .5H14.500V13.500H.5ZM4 .5V13.500M7 3.500H12V7.500H7ZM4 10H14"/>'), 'background:#c9c6ca;height:22px;justify-content:center'],
    I(1438, 14, 13, '<path d="M.5 .5H5.500V5H.5ZM8.500 .5H13.500V5H8.500ZM.5 8H5.500V12.500H.5ZM8.500 8H13.500V12.500H8.500Z"/>'),
    I(1480, 14, 13, '<path d="M7 2V12.500M.5 1H6L7 2L8 1H13.500V11.500H8L7 12.500L6 11.500H.5ZM2 4H5M2 6.500H5M2 9H5M9 4H12M9 6.500H12M9 9H12"/>'),
    I(1521, 14, 13, '<path d="M0 .7H14M1.500 1V7H12.500V1M4 4H10M7 7V12M4.500 12.500H9.500"/>'),
    I(1554, 10, 3, '<path d="M0 1.500H9"/>'), I(1568, 103, 14, '<path d="M0 7.500H103M51.500 4V11"/><path d="M42 1H47V13H42Z" fill="#555" stroke="none"/>'), I(1676, 9, 9, '<path d="M0 4.500H8M4 .5V8.500"/>'),
    T(1696, 20, '86%'), I(1733, 11, 12, '<path d="M.5 .5H10.500V11.500H.5Z" stroke-dasharray="3 1"/><path d="M5.500 1.500V4M5.500 10.500V8M2 6H4M7 6H9"/>')]));

/* ---------- app icons ---------- */
const chrome = (badge = '') => `<circle cx="12" cy="12" r="11.500" fill="#f8bd1a" stroke="none"/><path d="M12 12L2 6.200A11.500 11.500 0 0 1 22 6.500H12Z" fill="#df3b2f" stroke="none"/><path d="M12 12L2 6.200A11.500 11.500 0 0 0 11.500 23.500L17 14Z" fill="#27a04b" stroke="none"/><circle cx="12" cy="12" r="5.500" fill="#3e7fe8" stroke="#fff" stroke-width="1.300"/>${badge}`;
const folder = '<path d="M0 3Q0 1 2 1H9L12 4H26Q28 4 28 6V24H0Z" fill="#d79b15" stroke="none"/><path d="M0 7H28V25Q28 27 26 27H2Q0 27 0 25Z" fill="#fcc93f" stroke="none"/><path d="M5 27V21Q5 19 7 19H21Q23 19 23 21V27Z" fill="#1b7fd1" stroke="none"/><path d="M9 23H19" stroke="#0d4f91" stroke-width="1.500"/>';
const edge = '<circle cx="14" cy="14" r="13.500" fill="#1877c9" stroke="none"/><path d="M.6 12C2 4 8 .5 14 .5C22 .5 27.500 6 27.500 12C27.500 17 24 19 20 19C17 19 16 18 17 16C18 11 13 9 9 10C5 10.500 2 13 .6 17Z" fill="#3cc5c0" stroke="none"/><path d="M16 .6C24 1.500 27.500 7 27.500 12C27.500 17 24 19 20 19C17 19 16 18 17 16Q22 9 16 .6Z" fill="#5bd56b" stroke="none"/><path d="M9 14C7 21 12 26 19 26.500Q9 29 4 22Q1 16 9 14Z" fill="#124f9f" stroke="none"/><path d="M12 14Q10 21 17 22.500Q22 23.500 26 20Q22 27 16 26Q9 24 9 17Q10 14 12 14Z" fill="#dff0fa" stroke="none" opacity=".4"/>';
const office = (letter, c1, c2, c3) => `<path d="M7 1H29V14H7Z" fill="${c1}" stroke="none"/><path d="M7 14H29V27H7Z" fill="${c2}" stroke="none"/><path d="M7 8H29V14H7Z" fill="${c2}" opacity=".5" stroke="none"/><rect y="7" width="16" height="15" rx="1.500" fill="${c3}" stroke="none"/><text x="8" y="19" text-anchor="middle" font-family="Open Sans" font-weight="700" font-size="12.500" fill="#fff" stroke="none">${letter}</text>`;
const eclipse = '<circle cx="13" cy="14" r="12.500" fill="#f39a1d" stroke="none"/><circle cx="15.500" cy="14" r="12.500" fill="#2c2255" stroke="none"/><path d="M4 10.500H28M3.500 14H28M4 17.500H28" stroke="#fff" stroke-width="2"/>';
const skype = '<path d="M7 1Q12-1 16 1.500Q23 4 23 11Q25.500 16 23 20Q20 25 14 23.500Q4 24 2 14Q-1 9 1.500 5Q3.500 1.500 7 1Z" fill="#18a4e8" stroke="none"/><text x="12" y="18" text-anchor="middle" font-family="Open Sans" font-weight="700" font-size="17" fill="#fff" stroke="none">S</text>';
const scaled = (w, h, vw, vh, inner) => `<svg width="${w}" height="${h}" viewBox="0 0 ${vw} ${vh}" preserveAspectRatio="none" fill="none">${inner}</svg>`;
const A = (cx, w, h, vw, vh, inner, st = '') => [cx - w / 2, w, scaled(w, h, vw, vh, inner), st];

define('remote-taskbar', `:host{display:flex;height:38px;background:linear-gradient(90deg,#cfe5ef,#d3e4ec 50%,#d8dfea);color:#3a3f45;font-size:13px}:host>.c{height:38px}`,
  row(170, [
    [186, 18, scaled(18, 19, 18, 19, '<path d="M0 2.500L7.500 1.500V9H0ZM8.500 1.400L18 0V9H8.500ZM0 10H7.500V17.500L0 16.500ZM8.500 10H18V19L8.500 17.600Z" fill="#0b0b10"/>')],
    [221, 294, row(222, [I(233, 17, 17, '<circle cx="10.500" cy="6" r="5.300" stroke-width="1.400"/><path d="M6.500 10L0 16.500" stroke-width="1.400"/>', 'margin-top:-1px'), T(261, 135, 'Type here to search', 'font-size:15.500px')]), 'background:#fff;border:1px solid #b9b8ba;border-top:2px solid #a9a8ab;color:#444'],
    I(532, 18, 17, '<path d="M0 1H11M0 16H11M1.500 4.500H9.500V12.500H1.500ZM1.500 0V17M9.500 0V17M15.500 0V4M15.500 12V17M15.500 6V9" stroke-width="1.300"/>'),
    A(593, 24, 24, 24, 24, '<circle cx="12" cy="12" r="11.500" fill="#f6a21c"/><path d="M12 .5A11.500 11.500 0 0 1 23.500 12L17 12L7 6L3 5A11.500 11.500 0 0 1 12 .5Z" fill="#6a5be0"/><circle cx="12" cy="12" r="6" fill="#fff"/><circle cx="12" cy="10.500" r="2" fill="#333"/><path d="M11 11H13V16H11Z" fill="#333"/>'),
    A(644, 27, 26, 27, 26, chrome('<circle cx="18.500" cy="18" r="8" fill="#f4eceb"/><text x="18.500" y="21" text-anchor="middle" font-size="8.500" font-weight="700" font-family="Open Sans" fill="#d02f2c" textLength="14" lengthAdjust="spacingAndGlyphs">java</text>')),
    A(693.5, 23, 22, 28, 28, folder), A(743, 25, 26, 28, 28, edge),
    A(793, 22, 19, 22, 19, '<path d="M0 0H22V19H0Z" fill="#8b8d90"/><path d="M1 3H21V18H1Z" fill="#060606"/><path d="M3 6H8M9 8H11" stroke="#ddd"/>'),
    A(843, 24, 22, 24, 22, '<path d="M2 3L14 1L21 3V15L18 20L12 18L10 21L4 19Z" fill="#a3b1ba"/><path d="M6 4L20 3V13L7 14Z" fill="#e4edf2"/><path d="M10 11L12 6L14 10L16 8L18 11" stroke="#52616c"/>'),
    [870, 45, scaled(24, 24, 24, 24, '<circle cx="13" cy="12" r="11" fill="#e0603a"/><path d="M13 1A11 11 0 0 1 24 12H13Z" fill="#f4906a"/><rect y="6" width="11" height="12" rx="1" fill="#c43f1d"/><text x="5.500" y="16" text-anchor="middle" font-family="Open Sans" font-weight="700" font-size="10" fill="#fff">P</text>'), 'background:#f0f3f6;justify-content:center'],
    A(945, 24, 24, 28, 28, eclipse),
    A(995, 25, 24, 25, 24, '<path d="M17 0L25 3V21L17 24L2 9L0 7L3 5L17 17V7L3 19L0 17L2 15Z" fill="#1f8ad2"/><path d="M17 0L25 3V21L17 24Z" fill="#37a7ee"/>'),
    A(1046, 26, 26, 26, 26, chrome('<circle cx="18.500" cy="18" r="7.500" fill="#1575b8"/><text x="18.500" y="22" text-anchor="middle" font-size="10" font-family="Open Sans" fill="#cfe9fa">A</text>')),
    A(1094.5, 24, 24, 25, 24, skype),
    A(1144, 23, 22, 23, 22, '<path d="M8 2L21 0L22 17L15 21Z" fill="#77797a"/><path d="M7 3L18 1L15 20L0 17Z" fill="#a9cfdc"/><path d="M7 3L18 1L17 6L2 14Z" fill="#d8ecf0"/>'),
    A(1193, 25, 24, 29, 28, office('X', '#2fb174', '#17834b', '#107c41')), A(1243, 24, 24, 25, 24, skype),
    A(1292.5, 26, 25, 26, 25, '<circle cx="12" cy="11" r="11" fill="#2568bd"/><path d="M3 7Q12 5 15 10L22 18Q10 24 3 16Z" fill="#f2f5f8"/><circle cx="18.500" cy="17" r="7.500" fill="#e12d39"/><text x="18.500" y="21.500" text-anchor="middle" font-size="12" font-family="Open Sans" fill="#fff">1</text>'),
    A(1341, 24, 24, 29, 28, office('W', '#41a5ee', '#1e5dbe', '#185abd')),
    A(1398, 22, 24, 22, 24, '<path d="M1 1L18 0L22 8L17 12L18 16L11 19L3 16L5 11L0 9Z" fill="#fba91e"/><path d="M6 18L11 24L16 18L11 20Z" fill="#c9532d"/>'),
    T(1419, 38, 'GBP...', 'font-size:15px'), I(1482, 14, 9, '<path d="M.5 8L7 1L13.500 8" stroke-width="1.300"/>'),
    I(1506, 16, 10, '<path d="M.5 .5H13.500V9.500H.5ZM15 3V7" stroke="#222"/><path d="M2 2H6V8H2Z" fill="#111" stroke="none"/>'),
    I(1530, 18, 14, '<path d="M.7 5V9.500H3L7 13V1.500L3 5ZM9.500 4.500Q11 7 9.500 9.500M12 3Q14.500 7 12 11.500M14.500 1Q18.500 7 14.500 13"/>'),
    I(1559, 16, 16, '<path d="M9 0L6 10Q0 8 1 13Q2 17 6 14Q8 9 14 4Q16 1 12 3L9 9L14 8V11" stroke-width="1.200"/>'), T(1591, 23, 'ENG', 'font-size:14px'),
    [1627, 62, '<fit-text w="28" style="margin:0 17px">11:43</fit-text><fit-text w="62">22-09-2023</fit-text>', 'flex-direction:column;align-items:flex-start;justify-content:center;line-height:18.500px;height:38px;font-size:13.500px'],
    A(1721.5, 26, 26, 26, 26, '<path d="M0 0H17V14H6L2 18V14H0Z" fill="#0c0c0c"/><path d="M3 4H14M3 7H14M3 10H14" stroke="#ccd"/><circle cx="17" cy="17.500" r="8" fill="#c3c7ce" stroke="#8a8d92"/><text x="17" y="22" text-anchor="middle" font-family="Open Sans" font-size="12" fill="#222">21</text>')]));

define('sharing-notice', `:host{position:absolute;left:578px;top:793px;width:426px;height:43px;background:#fff;box-shadow:0 1px 5px #0005;display:flex;align-items:center;color:#3c4043;font-size:13px}
.b{background:#1a73e8;border-radius:4px;height:33px;color:#fff;font-weight:600;font-size:13px;justify-content:center}u{color:#3a78d8}`,
  row(748, [I(758, 6, 13, '<path d="M1 0V13M4.500 0V13" stroke="#d3d0d3" stroke-width="1.500"/>'), T(775, 237, 'teams.microsoft.com is sharing your screen.'),
    [1023, 104, '<div class="c b" style="width:104px"><fit-text w="71">Stop sharing</fit-text></div>'], T(1137, 26, '<u>Hide</u>', 'color:#3a78d8')]));

define('shared-screen', `:host{display:flex;flex-direction:column;position:relative;width:1580px;height:884px;overflow:hidden;flex:none}`,
  `<ppt-head></ppt-head><ppt-ribbon></ppt-ribbon><ppt-body></ppt-body><ppt-status></ppt-status><remote-taskbar></remote-taskbar><sharing-notice></sharing-notice>`);

define('meeting-stage', `:host{display:flex;height:896px;padding:6px 6px 6px 6px;background:#1f1f1f}
.l,.r{background:#1b191c;height:884px}.l{width:164px;padding-top:843px}.n{width:112px;height:31px;margin-left:10px;border-radius:4px;background:#0c0b0c;color:#fff;font-size:13.500px;display:flex;align-items:center;padding-left:8px}
.r{flex:1;padding-top:776px;display:flex;justify-content:flex-end}.v{width:35px;height:108px;background:linear-gradient(165deg,#34352c,#3c3c3b 40%,#65635f 60%,#454542 75%,#77716b);display:grid;place-items:center;color:#fff}`,
  `<div class="l"><div class="n"><fit-text w="95">Amit K (Guest)</fit-text></div></div><shared-screen></shared-screen><div class="r"><div class="v">${S(10, 18, '<path d="M8 .5L0 9L8 17.500" stroke-width="1.500"/>')}</div></div>`);

/* ---------- local taskbar ---------- */
define('task-app', `:host{display:flex;flex-direction:column;align-items:center;width:55px;height:59px;padding-top:4px;flex:none}.x{height:41px;width:49px;display:grid;place-items:center;border-radius:5px 5px 0 0}.d{width:49px;height:10px;padding-top:4px;border-radius:0 0 5px 5px}
i{display:block;width:8px;height:4px;border-radius:2px;background:#9aa0b4;margin:0 auto}:host([active]) i{width:20px;background:#4cc2ff}:host([active]) .x{background:#ffffff14}:host([active]) .d{background:#ffffff14}`,
  el => `<div class="x"><slot></slot></div><div class="d">${el.hasAttribute('run') ? '<i></i>' : ''}</div>`);
const app = (attrs, w, h, vw, vh, inner) => `<task-app ${attrs}>${scaled(w, h, vw, vh, inner)}</task-app>`;

define('local-taskbar', `:host{display:flex;height:60px;border-top:1px solid #3a4450;background:linear-gradient(90deg,#1b212c 0,#1a212d 190px,#13225a 500px,#131e63 640px,#17206b 760px,#1b2250 1080px,#14205e 1280px,#182352 1400px,#1b212f 1520px,#1b212d);color:#fff;font-size:15px}
:host>.c{height:59px}svg{overflow:visible}
.pill{height:40px;width:275px;border-radius:20px;background:linear-gradient(90deg,#37436f,#37407e 60%,#343d78);border:1px solid #4a5585;display:flex;align-items:center;font-size:18px;color:#d5d9ea;margin-top:-1px}
.lu{width:66px;height:33px;border-radius:17px;background:#000;color:#fff;font-size:10px;font-weight:600;justify-content:center}`,
  row(0, [
    A(41, 30, 28, 30, 28, '<circle cx="12" cy="12" r="10.500" fill="#f7a928"/><path d="M8 27Q1 26 3 20Q5 16 9 18Q13 10 20 14Q23 16 23 18Q29 18 29 23Q29 27 24 27Z" fill="#e6e9ee"/>', 'margin-top:-2px'),
    [64, 90, '<fit-text w="32">25°C</fit-text><fit-text w="90" style="color:#c5c8ce">Mostly sunny</fit-text>', 'flex-direction:column;align-items:flex-start;justify-content:center;line-height:20px;padding-bottom:4px'],
    A(489.5, 29, 29, 29, 29, '<defs><linearGradient id="w" x2="1" y2="1"><stop stop-color="#7fe6ff"/><stop offset="1" stop-color="#0a8bf5"/></linearGradient></defs><path d="M0 0H14V14H0ZM15 0H29V14H15ZM0 15H14V29H0ZM15 15H29V29H15Z" fill="url(#w)"/>'),
    [521, 275, `<div class="pill">${row(522, [I(536, 19, 18, '<circle cx="8" cy="8" r="6.500" stroke-width="2"/><path d="M13 13L18 17.500" stroke-width="2.500"/>'), T(567, 51, 'Search'), [725, 66, '<div class="c lu"><fit-text w="35">lululemon</fit-text></div>']])}</div>`]]) +
  `<div style="width:2px"></div>` +
  app('', 30, 28, 30, 28, '<path d="M0 8H21V28H0Z" fill="#6b6f7c"/><path d="M8 0H30V20H8Z" fill="#f2f3f5"/><path d="M8 8H21V20H8Z" fill="#aeb1b6"/>') +
  app('run', 30, 28, 28, 28, folder) +
  app('run', 30, 30, 28, 28, edge + '<path d="M0 18H14V28H0Z" fill="#c97c16"/><path d="M0 18H14V23H0Z" fill="#e79a2c"/><path d="M4 18V16H10V18" stroke="#e79a2c"/><path d="M6 21H8V24H6Z" fill="#5a330a"/>') +
  app('', 29, 30, 29, 30, '<path d="M8 6V2Q8 1 9 1H20Q21 1 21 2V6" stroke="#3fa9ee" stroke-width="2"/><path d="M0 5H29V26Q29 29 26 29H3Q0 29 0 26Z" fill="#f0f1f3"/><path d="M9 11H14V16.500H9Z" fill="#f25022"/><path d="M15.500 11H20.500V16.500H15.500Z" fill="#7fba00"/><path d="M9 17.500H14V23H9Z" fill="#00a4ef"/><path d="M15.500 17.500H20.500V23H15.500Z" fill="#ffb900"/>') +
  app('', 27, 29, 27, 29, '<path d="M12 0L21 5Q14 6 13 11V18L8 21L0 22V9Q0 7 2 6Z" fill="#a99be8"/><path d="M12 0L25 7Q27 8 27 10V20L19 16V11L13 8Q14 4 12 0Z" fill="#45b7f2"/><path d="M0 21L8 21L13 18L19 16L27 20Q27 22 25 23L15 28.500Q13.500 29.300 12 28.500Z" fill="#a863d6"/><path d="M0 9Q0 7 2 6L9 2Q6 8 6 14V21L0 21Z" fill="#6e62c8"/><path d="M8 11L13.500 8L19 11V17L13.500 20.500L8 17Z" fill="#1b2053"/>') +
  app('run', 30, 28, 29, 28, '<path d="M10 1H26V14H10Z" fill="#1490df"/><path d="M7 12L29 12V27H7Z" fill="#28a8ea"/><path d="M7 27L29 12V27Z" fill="#50d0ff"/><rect y="7" width="15" height="15" rx="1.500" fill="#0f6cbd"/><text x="7.500" y="19" text-anchor="middle" font-family="Open Sans" font-weight="700" font-size="12.500" fill="#fff">O</text><circle cx="25.500" cy="3" r="9.700" fill="#5cc6f5"/><path d="M20-1.500H31V7.500H20ZM20-1.500L25.500 3.500L31-1.500" stroke="#0c1c2c" stroke-width="1.500"/>') +
  app('run active', 30, 28, 29, 28, '<circle cx="16" cy="4" r="4.500" fill="#7b83eb"/><path d="M10 9H22V20Q21 27 15 27Q10 26 10 20Z" fill="#7b83eb"/><path d="M22 10H29V18Q28 23 22 22Z" fill="#5059c9"/><rect y="7" width="15" height="15" rx="1.500" fill="#4b53bc"/><text x="7.500" y="19" text-anchor="middle" font-family="Open Sans" font-weight="700" font-size="12.500" fill="#fff">T</text><circle cx="27" cy="4.500" r="8" fill="#d3213c"/><text x="27" y="9.500" text-anchor="middle" font-family="Open Sans" font-weight="600" font-size="14" fill="#fff">2</text>') +
  app('run', 30, 30, 30, 30, '<circle cx="15" cy="15" r="14" fill="#d95a08" stroke="#c04f08" stroke-width="2" stroke-dasharray="3 2"/><circle cx="15.500" cy="7.500" r="2.500" fill="#3c1b06"/><path d="M11 12H17V21H19V23.500H12V21H14V14.500H11Z" fill="#3c1b06"/>') +
  app('run', 29, 28, 29, 28, office('W', '#41a5ee', '#1e5dbe', '#185abd')) +
  app('run', 30, 28, 30, 28, '<path d="M10 0A13 14 0 0 0 10 28A16 15 0 0 1 10 0Z" fill="#f39a1d"/><circle cx="15.500" cy="14" r="12" fill="#251d4e"/><path d="M3.500 10H30M3 14H30M3.500 18H30" stroke="#f4f4f8" stroke-width="1.700"/>') +
  app('run', 27, 27, 27, 27, '<path d="M0 0H14L0 20Z" fill="#fc801d"/><path d="M8 0H27V14Z" fill="#fe2d6c"/><path d="M0 8V27H27V6Z" fill="#1b75f1"/><path d="M3.500 3.500H23.500V23.500H3.500Z" fill="#070309"/><text x="6" y="14" font-family="Liberation Mono" font-weight="700" font-size="11" fill="#fff">IJ</text><path d="M6 20H13" stroke="#fff" stroke-width="1.500"/>') +
  app('run', 27, 27, 27, 27, '<rect width="27" height="27" rx="3" fill="#3183d3"/><path d="M0 22L11 10Q13.500 8 16 10L27 24V27H0Z" fill="#56c7f4"/><path d="M6 27L19 13L27 22V27Z" fill="#2160b8"/><circle cx="20" cy="5.500" r="2.500" fill="#fff"/>') +
  row(1458, [
    I(1516, 14, 9, '<path d="M1 8L7 2L13 8" stroke-width="1.800"/>'),
    I(1553, 20, 14, '<path d="M4 14Q0 13 0 9.500Q0 6 4 5.500Q7-1 13 2Q15 3 16 5.500Q20 6 20 10Q20 14 16 14Z" fill="#1c88dc" stroke="none"/><path d="M2 6.500Q7 2 12 8L20 11Q19 14 16 14H4Z" fill="#41a7ee" stroke="none"/>'),
    [1583, 39, S(21, 22, '<rect x="7" y="1" width="7" height="12" rx="3.500" fill="#fff" stroke="none"/><path d="M3.500 10C3.500 19 17.500 19 17.500 10M10.500 17V21.500" stroke-width="1.500"/><path d="M2 0L21 19" stroke="#2b313d" stroke-width="3"/><path d="M.5 1L19.500 20" stroke-width="1.500"/>'), 'height:50px;margin-top:4px;background:#ffffff12;border:1px solid #ffffff18;border-radius:5px;justify-content:center'],
    [1637, 29, '<fit-text w="29">ENG</fit-text><fit-text w="15">IN</fit-text>', 'flex-direction:column;align-items:center;justify-content:center;line-height:20px;font-size:14.500px;padding-bottom:2px'],
    I(1688, 20, 16, '<path d="M1 6Q10-2.500 19 6M4 9Q10 3 16 9M7 12Q10 9 13 12" stroke-width="1.600"/><circle cx="10" cy="14" r="1.500" fill="#fff" stroke="none"/>', 'margin-top:-1px'),
    I(1718, 20, 16, '<path d="M1 5.500V10.500H4L8 14.500V1.500L4 5.500ZM11 5Q13 8 11 11M14 3Q17.500 8 14 13M17 1Q21.500 8 17 15" stroke-width="1.400"/>', 'margin-top:-1px'),
    I(1748, 20, 17, '<path d="M6 5H16Q17.500 5 17.500 6.500V13.500Q17.500 15 16 15H4Q2.500 15 2.500 13.500V9" stroke-width="1.500"/><path d="M7 7H15V13H4.500V10Z" fill="#fff" stroke="none"/><path d="M19 8V12" stroke-width="2"/><path d="M4 0L0 6H3L2 10L7 4H4L6 0Z" fill="#fff" stroke="none"/>', 'margin-top:-2px'),
    [1788, 77, '<fit-text w="35">11:43</fit-text><fit-text w="77">22-09-2023</fit-text>', 'flex-direction:column;align-items:flex-end;justify-content:center;line-height:20px;font-size:14.500px;padding-bottom:2px'],
    [1877, 17, S(17, 20, '<path d="M0 16L2 13V8Q2 3 8 3Q13 3 14 8V13L16 16ZM5 17H11Q10 20 8 20T5 17Z" fill="#fff" stroke="none"/><path d="M5 8H9L5 13H9" stroke="#1b212d" stroke-width="1.300"/><path d="M12 1H16L12 6H16.500" stroke-width="1.400"/>')]]));

define('meeting-app', `:host{display:flex;flex-direction:column;width:1920px;height:1080px}`,
  `<window-bar></window-bar><call-bar></call-bar><meeting-stage></meeting-stage><local-taskbar></local-taskbar>`);
</script>
</body>
</html>
